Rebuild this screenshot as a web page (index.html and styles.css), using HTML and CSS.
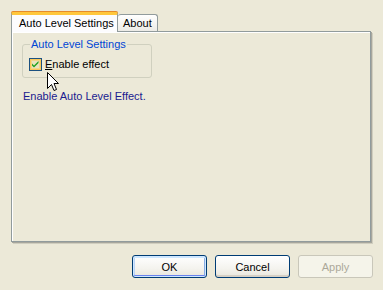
FILE: index.html
```html
<!DOCTYPE html>
<html>
<head>
<meta charset="utf-8">
<link rel="stylesheet" href="styles.css">
</head>
<body>
<div class="dialog">
  <div class="tabs">
    <div class="tab active">Auto Level Settings</div>
    <div class="tab">About</div>
  </div>
  <div class="panel">
    <fieldset class="group">
      <legend>Auto Level Settings</legend>
      <label class="check">
        <span class="box">
          <svg width="13" height="13" viewBox="0 0 13 13">
            <rect x="0.5" y="0.5" width="12" height="12" fill="#F4F1D6" stroke="#1C5180"/>
            <rect x="1.5" y="1.5" width="10" height="10" fill="none" stroke="#F9C75B"/>
            <rect x="2.5" y="2.5" width="8" height="8" fill="#E8E3BE" stroke="#F3D68A"/>
            <path d="M3 5.5 L5 7.5 L9.5 3 L9.5 5 L5 9.5 L3 7.5 Z" fill="#21A121"/>
          </svg>
        </span>
        <span class="lbl"><u>E</u>nable effect</span>
      </label>
      <svg class="cursor" width="12" height="20" viewBox="0 0 12 20">
        <path d="M0.5 0.5 L0.5 16.5 L4.5 12.5 L7 18.5 L9.5 17.5 L7 11.5 L11.5 11.5 Z" fill="#fff" stroke="#000" stroke-width="1" stroke-linejoin="miter"/>
      </svg>
    </fieldset>
    <p class="desc">Enable Auto Level Effect.</p>
  </div>
  <div class="buttons">
    <button class="btn default">OK</button>
    <button class="btn">Cancel</button>
    <button class="btn disabled">Apply</button>
  </div>
</div>
</body>
</html>
```
FILE: styles.css
```css
html, body {
  margin: 0;
  padding: 0;
  background: #ECE9D8;
  font-family: "Liberation Sans", Arial, sans-serif;
  font-size: 11px;
  color: #000;
}
.dialog {
  width: 383px;
  height: 290px;
  display: flex;
  flex-direction: column;
}
.tabs {
  display: flex;
  align-items: flex-end;
  margin: 11px 0 -1px 11px;
  height: 21px;
  position: relative;
  z-index: 2;
}
.tab {
  box-sizing: border-box;
  height: 17px;
  margin-bottom: 1px;
  padding: 0 5px;
  line-height: 16px;
  white-space: nowrap;
  border: 1px solid #919B9C;
  border-bottom: none;
  border-radius: 3px 3px 0 0;
  background: linear-gradient(#FFFFFF, #ECEBE6);
}
.tab.active {
  height: 20px;
  margin-bottom: 0;
  width: 107px;
  padding: 0 7px;
  line-height: 17px;
  border-top: 3px solid #FFC73C;
  box-shadow: 0 -1px 0 #E68B2C;
  background: #FCFCFE;
  border-radius: 2px 2px 0 0;
}
.tab.active + .tab {
  border-left: none;
}
.panel {
  box-sizing: border-box;
  margin-left: 11px;
  width: 360px;
  height: 211px;
  border: 1px solid #919B9C;
  box-shadow: inset 1px 1px 0 #FFFFFF, 1px 1px 0 #A7A69C, 2px 2px 0 #D0CEBF;
  padding: 6px 0 0 10px;
  position: relative;
  z-index: 1;
}
.group {
  box-sizing: border-box;
  width: 130px;
  height: 40px;
  margin: 0;
  padding: 6px 0 0 6px;
  border: 1px solid #D0D0BF;
  border-radius: 3px;
  position: relative;
}
.group legend {
  color: #0046D5;
  padding: 0 1px;
  margin-left: 1px;
  font-size: 11px;
  line-height: 13px;
}
.check {
  display: flex;
  align-items: center;
  gap: 3px;
  height: 14px;
}
.box {
  display: block;
  width: 13px;
  height: 13px;
}
.box svg {
  display: block;
}
.lbl u {
  text-decoration: underline;
}
.cursor {
  position: absolute;
  left: 24px;
  top: 21px;
}
.desc {
  margin: 11px 0 0 1px;
  color: #1A1A8F;
  font-size: 11px;
  line-height: 14px;
}
.buttons {
  display: flex;
  justify-content: flex-end;
  gap: 8px;
  padding: 13px 10px 0 0;
}
.btn {
  box-sizing: border-box;
  width: 75px;
  height: 23px;
  border: 1px solid #003C74;
  border-radius: 3px;
  background: linear-gradient(#FFFFFF 0%, #F4F3EE 60%, #E8E6DC 100%);
  box-shadow: inset 0 -2px 0 #D6D0C5;
  font-family: "Liberation Sans", Arial, sans-serif;
  font-size: 11px;
  color: #000;
  padding: 0;
}
.btn.default {
  box-shadow: inset 0 0 0 1px #CEE7FF, inset 0 -2px 0 #6982EE, inset 0 2px 0 #CEE7FF, inset 2px 0 0 #BCD4F6, inset -2px 0 0 #89ADE4;
}
.btn.disabled {
  border-color: #C9C7BA;
  background: #F5F4EA;
  box-shadow: none;
  color: #ACA899;
}
```
